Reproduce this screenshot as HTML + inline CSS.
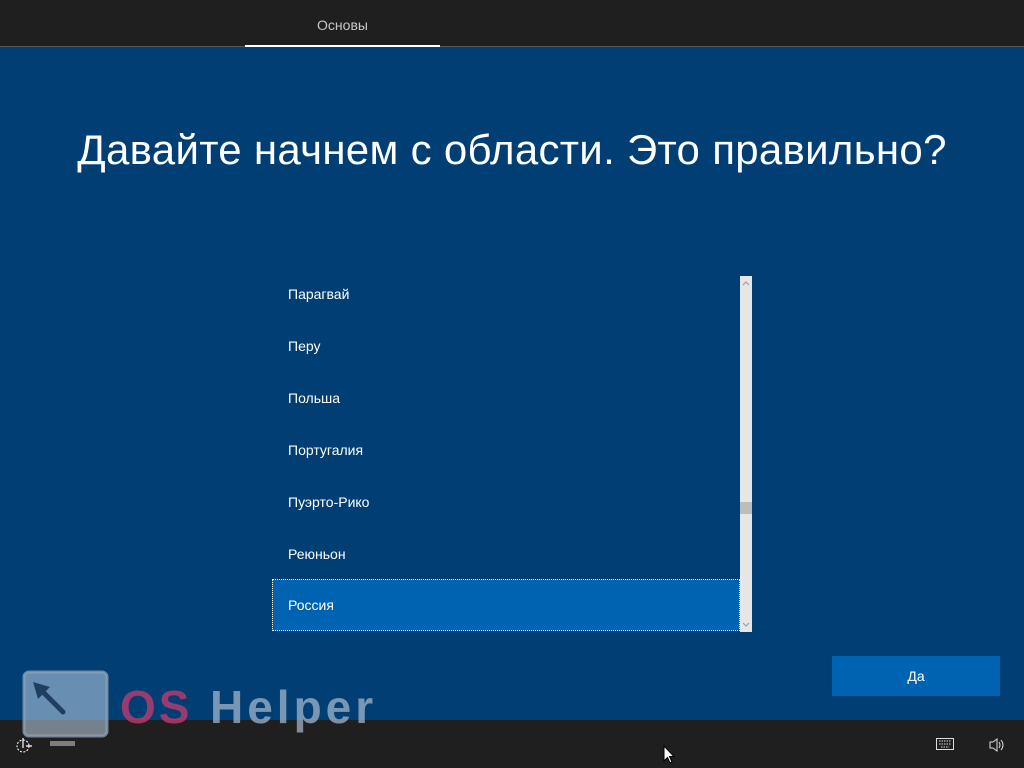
<!DOCTYPE html>
<html><head><meta charset="utf-8"><style>
*{margin:0;padding:0;box-sizing:border-box}
body{width:1024px;height:768px;overflow:hidden;background:#003e74;font-family:"Segoe UI","Liberation Sans",sans-serif;position:relative}
.top{position:absolute;left:0;top:0;width:1024px;height:47px;background:#1f1f1f}
.tab{position:absolute;left:245px;top:0;width:195px;height:47px;color:#c8c8c8;font-size:14px;text-align:center;line-height:50px;border-bottom:2px solid #fff}
.topline{position:absolute;left:0;top:46px;width:1024px;height:1px;background:#555}
h1{position:absolute;left:0;top:126px;width:1024px;text-align:center;color:#fff;font-weight:300;font-size:42px;letter-spacing:0.3px}
.list{position:absolute;left:272px;top:276px;width:468px;height:356px}
.item{height:52px;line-height:36px;padding-left:16px;color:#fff;font-size:14px}
.sel{position:absolute;left:0;top:303px;width:468px;height:52px;background:#0063b1;border:1px dotted #fff;color:#fff;font-size:14px;padding-left:15px;line-height:50px}
.sb{position:absolute;left:740px;top:276px;width:12px;height:356px;background:#e6e6e6}
.thumb{position:absolute;left:740px;top:502px;width:12px;height:12px;background:#bdbdbd}
.btn{position:absolute;left:832px;top:656px;width:168px;height:40px;background:#0063b1;color:#fff;font-size:14px;text-align:center;line-height:40px}
.bot{position:absolute;left:0;top:720px;width:1024px;height:48px;background:#1f1f1f}
</style></head><body>
<div class="top"></div><div class="topline"></div>
<div class="tab">Основы</div>
<h1>Давайте начнем с области. Это правильно?</h1>
<div class="list">
<div class="item">Парагвай</div>
<div class="item">Перу</div>
<div class="item">Польша</div>
<div class="item">Португалия</div>
<div class="item">Пуэрто-Рико</div>
<div class="item">Реюньон</div>
<div class="sel">Россия</div>
</div>
<div class="sb"></div><div class="thumb"></div>
<svg style="position:absolute;left:740px;top:276px" width="12" height="356"><path d="M3 9 L6 6 L9 9" stroke="#999" fill="none"/><path d="M3 347 L6 350 L9 347" stroke="#999" fill="none"/></svg>
<div class="btn">Да</div>
<div class="bot"></div>
<svg style="position:absolute;left:0;top:660px" width="400" height="108">
<rect x="24" y="12" width="83" height="64" rx="5" fill="rgba(190,210,230,0.55)" stroke="rgba(140,160,180,0.8)" stroke-width="3"/>
<rect x="50" y="81" width="25" height="5" fill="rgba(150,150,150,0.8)"/>
<path d="M63 52 L38 27" stroke="#1f3f60" stroke-width="5" stroke-linecap="round"/>
<path d="M33 22 L50 27 L38 39 Z" fill="#1f3f60"/>
<text x="120" y="63" font-family="Liberation Sans,sans-serif" font-weight="bold" font-size="46" letter-spacing="3" fill="rgba(200,60,110,0.75)">OS</text>
<text x="210" y="63" font-family="Liberation Sans,sans-serif" font-weight="bold" font-size="46" letter-spacing="4" fill="rgba(170,190,210,0.7)">Helper</text>
<circle cx="23" cy="86" r="6" fill="none" stroke="#fff" stroke-dasharray="2 1.5"/>
<path d="M23 78 V88 M26 86 H32" stroke="#fff" stroke-width="1.2"/>
</svg>
<svg style="position:absolute;left:936px;top:738px" width="18" height="12"><rect x="0.5" y="0.5" width="17" height="11" fill="none" stroke="#ddd"/><path d="M3 3h12M3 6h12M5 9h8" stroke="#ddd" stroke-dasharray="1.5 1"/></svg>
<svg style="position:absolute;left:988px;top:737px" width="18" height="16"><path d="M2 5h3l4-3v12l-4-3H2z" fill="none" stroke="#ddd"/><path d="M11 5q2 3 0 6M13 3q4 5 0 10" stroke="#ddd" fill="none"/></svg>
<svg style="position:absolute;left:663px;top:745px" width="12" height="20"><path d="M1 1 V16 L4.5 12.5 L7 18 L9 17 L6.5 11.5 H11 Z" fill="#fff" stroke="#000" stroke-width="1"/></svg>
</body></html>
